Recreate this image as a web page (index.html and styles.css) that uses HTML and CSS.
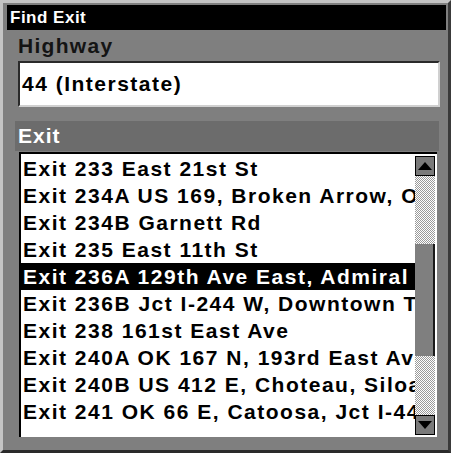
FILE: index.html
```html
<!DOCTYPE html>
<html lang="en">
<head>
  <meta charset="UTF-8">
  <title>Find Exit</title>
<link rel="stylesheet" href="styles.css">
</head>
<body>
<div class="frame">
  <div class="title">Find Exit</div>
  <div class="label">Highway</div>
  <div class="field">44 (Interstate)</div>
  <div class="band">Exit</div>
  <div class="list">
    <div class="rows">
      <div class="row">Exit 233 East 21st St</div>
      <div class="row">Exit 234A US 169, Broken Arrow, Owasso</div>
      <div class="row">Exit 234B Garnett Rd</div>
      <div class="row">Exit 235 East 11th St</div>
      <div class="row sel">Exit 236A 129th Ave East, Admiral Pl</div>
      <div class="row">Exit 236B Jct I-244 W, Downtown Tulsa</div>
      <div class="row">Exit 238 161st East Ave</div>
      <div class="row">Exit 240A OK 167 N, 193rd East Ave</div>
      <div class="row">Exit 240B US 412 E, Choteau, Siloam Springs</div>
      <div class="row">Exit 241 OK 66 E, Catoosa, Jct I-44</div>
    </div>
    <div class="scroll">
      <div class="arrow"><svg width="14" height="8" viewBox="0 0 14 8"><path d="M0 8 L7 0 L14 8 Z" fill="#000"/></svg></div>
      <div class="track top"></div>
      <div class="thumb"></div>
      <div class="track bottom"></div>
      <div class="arrow"><svg width="14" height="8" viewBox="0 0 14 8"><path d="M0 0 L7 8 L14 0 Z" fill="#000"/></svg></div>
    </div>
  </div>
</div>
</body>
</html>
```

FILE: styles.css
```css
body {
  margin: 0;
  background: #7f7f7f;
  font-family: "Liberation Sans", Arial, sans-serif;
  font-weight: bold;
}

.frame {
  width: 451px;
  height: 453px;
  box-sizing: border-box;
  border-top: 3px solid #c4c4c4;
  border-left: 3px solid #c4c4c4;
  border-right: 3px solid #3a3a3a;
  border-bottom: 3px solid #2a2a2a;
  background: #7f7f7f;
  display: flex;
  flex-direction: column;
  overflow: hidden;
}

.title {
  background: #000;
  color: #fff;
  margin: 2px 2px 0 4px;
  height: 25px;
  line-height: 25px;
  font-size: 17px;
  padding-left: 3px;
  letter-spacing: 0.5px;
}

.label {
  color: #141414;
  font-size: 21px;
  padding-left: 15px;
  height: 31px;
  line-height: 31px;
  letter-spacing: 1.3px;
}

.field {
  background: #fff;
  margin: 0 8px 0 15px;
  height: 46px;
  box-sizing: border-box;
  border-top: 2px solid #2a2a2a;
  border-left: 2px solid #2a2a2a;
  border-right: 2px solid #d0d0d0;
  border-bottom: 2px solid #d0d0d0;
  font-size: 21px;
  line-height: 42px;
  padding-left: 2px;
  color: #000;
  letter-spacing: 1.5px;
}

.band {
  background: #6c6c6c;
  color: #fff;
  margin: 14px 9px 0 12px;
  height: 30px;
  line-height: 30px;
  font-size: 21px;
  padding-left: 3px;
  letter-spacing: 1px;
}

.list {
  background: #fff;
  margin: 1px 11px 0 16px;
  height: 285px;
  box-sizing: border-box;
  border-top: 2px solid #000;
  border-left: 2px solid #000;
  display: flex;
  padding-right: 2px;
}

.rows {
  flex: 1;
  overflow: hidden;
  padding-top: 1px;
}

.row {
  height: 27px;
  line-height: 27px;
  font-size: 21px;
  color: #000;
  white-space: nowrap;
  padding-left: 2px;
  letter-spacing: 1.5px;
}

.row.sel {
  background: #000;
  color: #fff;
}

.scroll {
  width: 20px;
  display: flex;
  flex-direction: column;
  padding: 2px 0;
}

.arrow {
  height: 18px;
  background: #7a7a7a;
  border: 1px solid #000;
  display: flex;
  align-items: center;
  justify-content: center;
}

.track {
  background: repeating-conic-gradient(#9a9a9a 0 25%, #fff 0 50%) 0 0 / 2px 2px;
}

.track.top {
  height: 68px;
}

.track.bottom {
  flex: 1;
}

.thumb {
  height: 112px;
  background: #7f7f7f;
  border-right: 2px solid #1a1a1a;
}
```
